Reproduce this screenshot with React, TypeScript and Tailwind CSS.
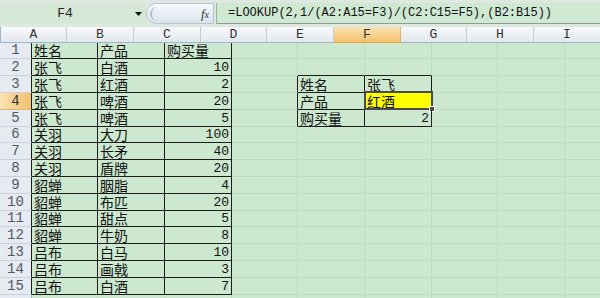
import React from 'react';

const COLS = [
  { name: 'A', w: 66 },
  { name: 'B', w: 67 },
  { name: 'C', w: 67 },
  { name: 'D', w: 66 },
  { name: 'E', w: 67 },
  { name: 'F', w: 67 },
  { name: 'G', w: 66 },
  { name: 'H', w: 67 },
  { name: 'I', w: 67 },
];

const colA = ['姓名', '张飞', '张飞', '张飞', '张飞', '关羽', '关羽', '关羽', '貂蝉', '貂蝉', '貂蝉', '貂蝉', '吕布', '吕布', '吕布'];
const colB = ['产品', '白酒', '红酒', '啤酒', '啤酒', '大刀', '长矛', '盾牌', '胭脂', '布匹', '甜点', '牛奶', '白马', '画戟', '白酒'];
const colC = ['购买量', '10', '2', '20', '5', '100', '40', '20', '4', '20', '5', '8', '10', '3', '7'];

// r is 1-based row, c is 0-based column (A = 0)
const inTable = (r: number, c: number) =>
  (r >= 1 && r <= 15 && c >= 0 && c <= 2) || (r >= 3 && r <= 5 && c >= 4 && c <= 5);

function cellValue(r: number, c: number): { text: string; num: boolean } | null {
  if (r >= 1 && r <= 15) {
    if (c === 0) return { text: colA[r - 1], num: false };
    if (c === 1) return { text: colB[r - 1], num: false };
    if (c === 2) return { text: colC[r - 1], num: r > 1 };
  }
  if (r === 3 && c === 4) return { text: '姓名', num: false };
  if (r === 3 && c === 5) return { text: '张飞', num: false };
  if (r === 4 && c === 4) return { text: '产品', num: false };
  if (r === 4 && c === 5) return { text: '红酒', num: false };
  if (r === 5 && c === 4) return { text: '购买量', num: false };
  if (r === 5 && c === 5) return { text: '2', num: true };
  return null;
}

const rowHeight = (r: number) => ((r - 1) % 5 === 0 ? 16 : 17);

function FormulaBar() {
  return (
    <div className="h-[27px] bg-[#dfe8e0] pt-[3px] flex">
      <div className="w-[130px] h-[21px] bg-[#d4e8d5] flex items-center justify-center font-['Liberation_Mono',monospace] text-[13px] text-[#222]">
        F4
      </div>
      <div className="w-[16px] h-[21px] bg-[#d4e8d5] flex items-center justify-center">
        <svg width="7" height="4" viewBox="0 0 7 4">
          <path d="M0 0h7L3.5 4z" fill="#111" />
        </svg>
      </div>
      <div className="w-[68px] h-[21px] relative bg-gradient-to-b from-[#f7f9fc] to-[#d9e3ee] border border-[#b7c3cf] rounded-l-[10px] flex items-center justify-end pr-[4px]">
        <div className="absolute left-[3px] top-[3px] w-[9px] h-[14px] rounded-l-full border-l-2 border-[#aebccb]" />
        <span className="font-['Liberation_Serif',serif] italic text-[13px] text-[#333] leading-none">
          f<span className="text-[10px]">x</span>
        </span>
      </div>
      <div className="flex-1 h-[21px] ml-[2px] bg-[#cfe8d1] border-l border-[#9eb2a2] border-b border-b-[#8c9c90] flex items-center pl-[11px] font-['Liberation_Mono',monospace] text-[12px] text-[#111] whitespace-nowrap">
        =LOOKUP(2,1/(A2:A15=F3)/(C2:C15=F5),(B2:B15))
      </div>
    </div>
  );
}

function HeaderRow() {
  return (
    <div className="flex h-[16px]">
      <div className="w-[32px] h-full relative bg-gradient-to-b from-[#eef2f6] to-[#dde3ea] border-r border-b border-[#9eb6ce]">
        <svg className="absolute right-[3px] bottom-[2px]" width="8" height="8" viewBox="0 0 8 8">
          <path d="M8 0V8H0z" fill="#b4c0cc" />
        </svg>
      </div>
      {COLS.map((col) =>
        col.name === 'F' ? (
          <div
            key={col.name}
            style={{ width: col.w }}
            className="h-full shrink-0 bg-gradient-to-b from-[#fbe2b2] to-[#f3c06c] border-r border-[#e0b46a] border-b border-b-[#f0a23e] flex items-center justify-center font-['Liberation_Mono',monospace] text-[13px] leading-[15px] text-[#333]"
          >
            {col.name}
          </div>
        ) : (
          <div
            key={col.name}
            style={{ width: col.w }}
            className="h-full shrink-0 bg-gradient-to-b from-[#f8f9fb] to-[#e2e7ed] border-r border-[#c4cdd7] border-b border-b-[#9eb6ce] flex items-center justify-center font-['Liberation_Mono',monospace] text-[13px] leading-[15px] text-[#333]"
          >
            {col.name}
          </div>
        )
      )}
    </div>
  );
}

function Cell({ r, c, w }: { r: number; c: number; w: number }) {
  const v = cellValue(r, c);
  const rightDark = inTable(r, c) || inTable(r, c + 1);
  const bottomDark = inTable(r, c) || inTable(r + 1, c);
  const selected = r === 4 && c === 5;
  return (
    <div
      style={{ width: w }}
      className={[
        'h-full shrink-0 flex items-center whitespace-nowrap px-[2px]',
        rightDark ? 'border-r border-r-[#1c1c1c]' : 'border-r border-r-[#bcdcbf]',
        bottomDark ? 'border-b border-b-[#1c1c1c]' : 'border-b border-b-[#bcdcbf]',
        selected ? 'bg-[#ffff00]' : '',
        v && v.num ? 'justify-end' : 'justify-start',
      ].join(' ')}
    >
      {v &&
        (v.num ? (
          <span className="font-['Liberation_Mono',monospace] text-[13px] text-[#111] leading-[15px]">{v.text}</span>
        ) : (
          <span className="font-['Noto_Sans_CJK_SC','Noto_Sans',sans-serif] text-[14px] text-[#111] leading-[15px]">
            {v.text}
          </span>
        ))}
    </div>
  );
}

function Row({ r }: { r: number }) {
  const active = r === 4;
  return (
    <div className="flex relative" style={{ height: rowHeight(r) }}>
      <div
        className={[
          'w-[32px] h-full shrink-0 flex items-center justify-center font-["Liberation_Mono",monospace] text-[14px] leading-[15px]',
          active
            ? 'bg-gradient-to-r from-[#fbe2b2] to-[#f3c06c] text-[#333] border-b border-b-[#e0b46a]'
            : 'bg-[#e6ebf1] text-[#4f5864] border-b border-b-[#c9d2dc]',
          r <= 15 ? 'border-r border-r-[#1c1c1c]' : 'border-r border-r-[#9eb6ce]',
        ].join(' ')}
      >
        {r <= 15 ? r : ''}
      </div>
      {COLS.map((col, c) => (
        <Cell key={col.name} r={r} c={c} w={col.w} />
      ))}
      {active && (
        <div className="absolute left-[364px] top-[-2px] w-[69px] h-[19px] border-2 border-[#4a4a4a] pointer-events-none">
          <div className="absolute right-[-4px] bottom-[-4px] w-[6px] h-[6px] bg-[#4a4a4a] border border-white" />
        </div>
      )}
    </div>
  );
}

export default function App() {
  const rows = Array.from({ length: 16 }, (_, i) => i + 1);
  return (
    <div className="w-[600px] h-[298px] overflow-hidden bg-[#cce8cf]">
      <FormulaBar />
      <HeaderRow />
      {rows.map((r) => (
        <Row key={r} r={r} />
      ))}
    </div>
  );
}
